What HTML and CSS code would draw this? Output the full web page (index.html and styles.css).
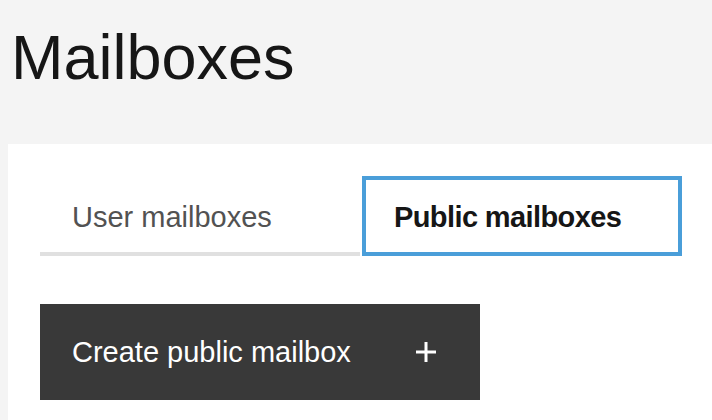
FILE: index.html
```html
<!DOCTYPE html>
<html lang="en">
<head>
  <meta charset="UTF-8">
  <meta name="viewport" content="width=device-width, initial-scale=1" />
  <title>Mailboxes</title>
  <link rel="stylesheet" href="styles.css">
</head>
<body>
  <h1 class="page-title">Mailboxes</h1>

  <div class="card">
    <div class="tabs">
      <button type="button" class="tab">User mailboxes</button>
      <button type="button" class="tab tab-selected">Public mailboxes</button>
    </div>

    <button type="button" class="primary-btn">
      <span>Create public mailbox</span>
      <svg class="btn-icon" width="20" height="20" viewBox="0 0 20 20" aria-hidden="true">
        <path d="M10 0v20M0 10h20" stroke="#fff" stroke-width="3" fill="none" />
      </svg>
    </button>
  </div>
</body>
</html>
```

FILE: styles.css
```css
body {
  margin: 0;
  background: #f4f4f4;
  font-family: "Liberation Sans", Arial, sans-serif;
  color: #161616;
  overflow: hidden;
}

.page-title {
  font-size: 63px;
  font-weight: 400;
  line-height: 1;
  margin: 0;
  padding: 26px 8px 0 11px;
  height: 144px;
  box-sizing: border-box;
}

.card {
  background: #fff;
  margin-left: 8px;
  padding: 32px 32px 20px;
}

.tabs {
  display: flex;
  gap: 2px;
}

.tab {
  flex-shrink: 0;
  width: 320px;
  height: 80px;
  box-sizing: border-box;
  display: flex;
  align-items: center;
  padding: 6px 32px 0;
  border: none;
  border-bottom: 4px solid #e0e0e0;
  background: #fff;
  font-family: inherit;
  font-size: 29px;
  color: #525252;
  cursor: pointer;
}

.tab-selected {
  font-weight: 700;
  letter-spacing: -0.6px;
  color: #161616;
  outline: 4px solid #4a9ed9;
  outline-offset: -4px;
}

.primary-btn {
  margin-top: 48px;
  width: 440px;
  height: 96px;
  display: flex;
  align-items: center;
  justify-content: space-between;
  padding: 0 44px 0 32px;
  border: none;
  background: #393939;
  color: #fff;
  font-family: inherit;
  font-size: 29px;
  cursor: pointer;
  box-sizing: border-box;
}
```
